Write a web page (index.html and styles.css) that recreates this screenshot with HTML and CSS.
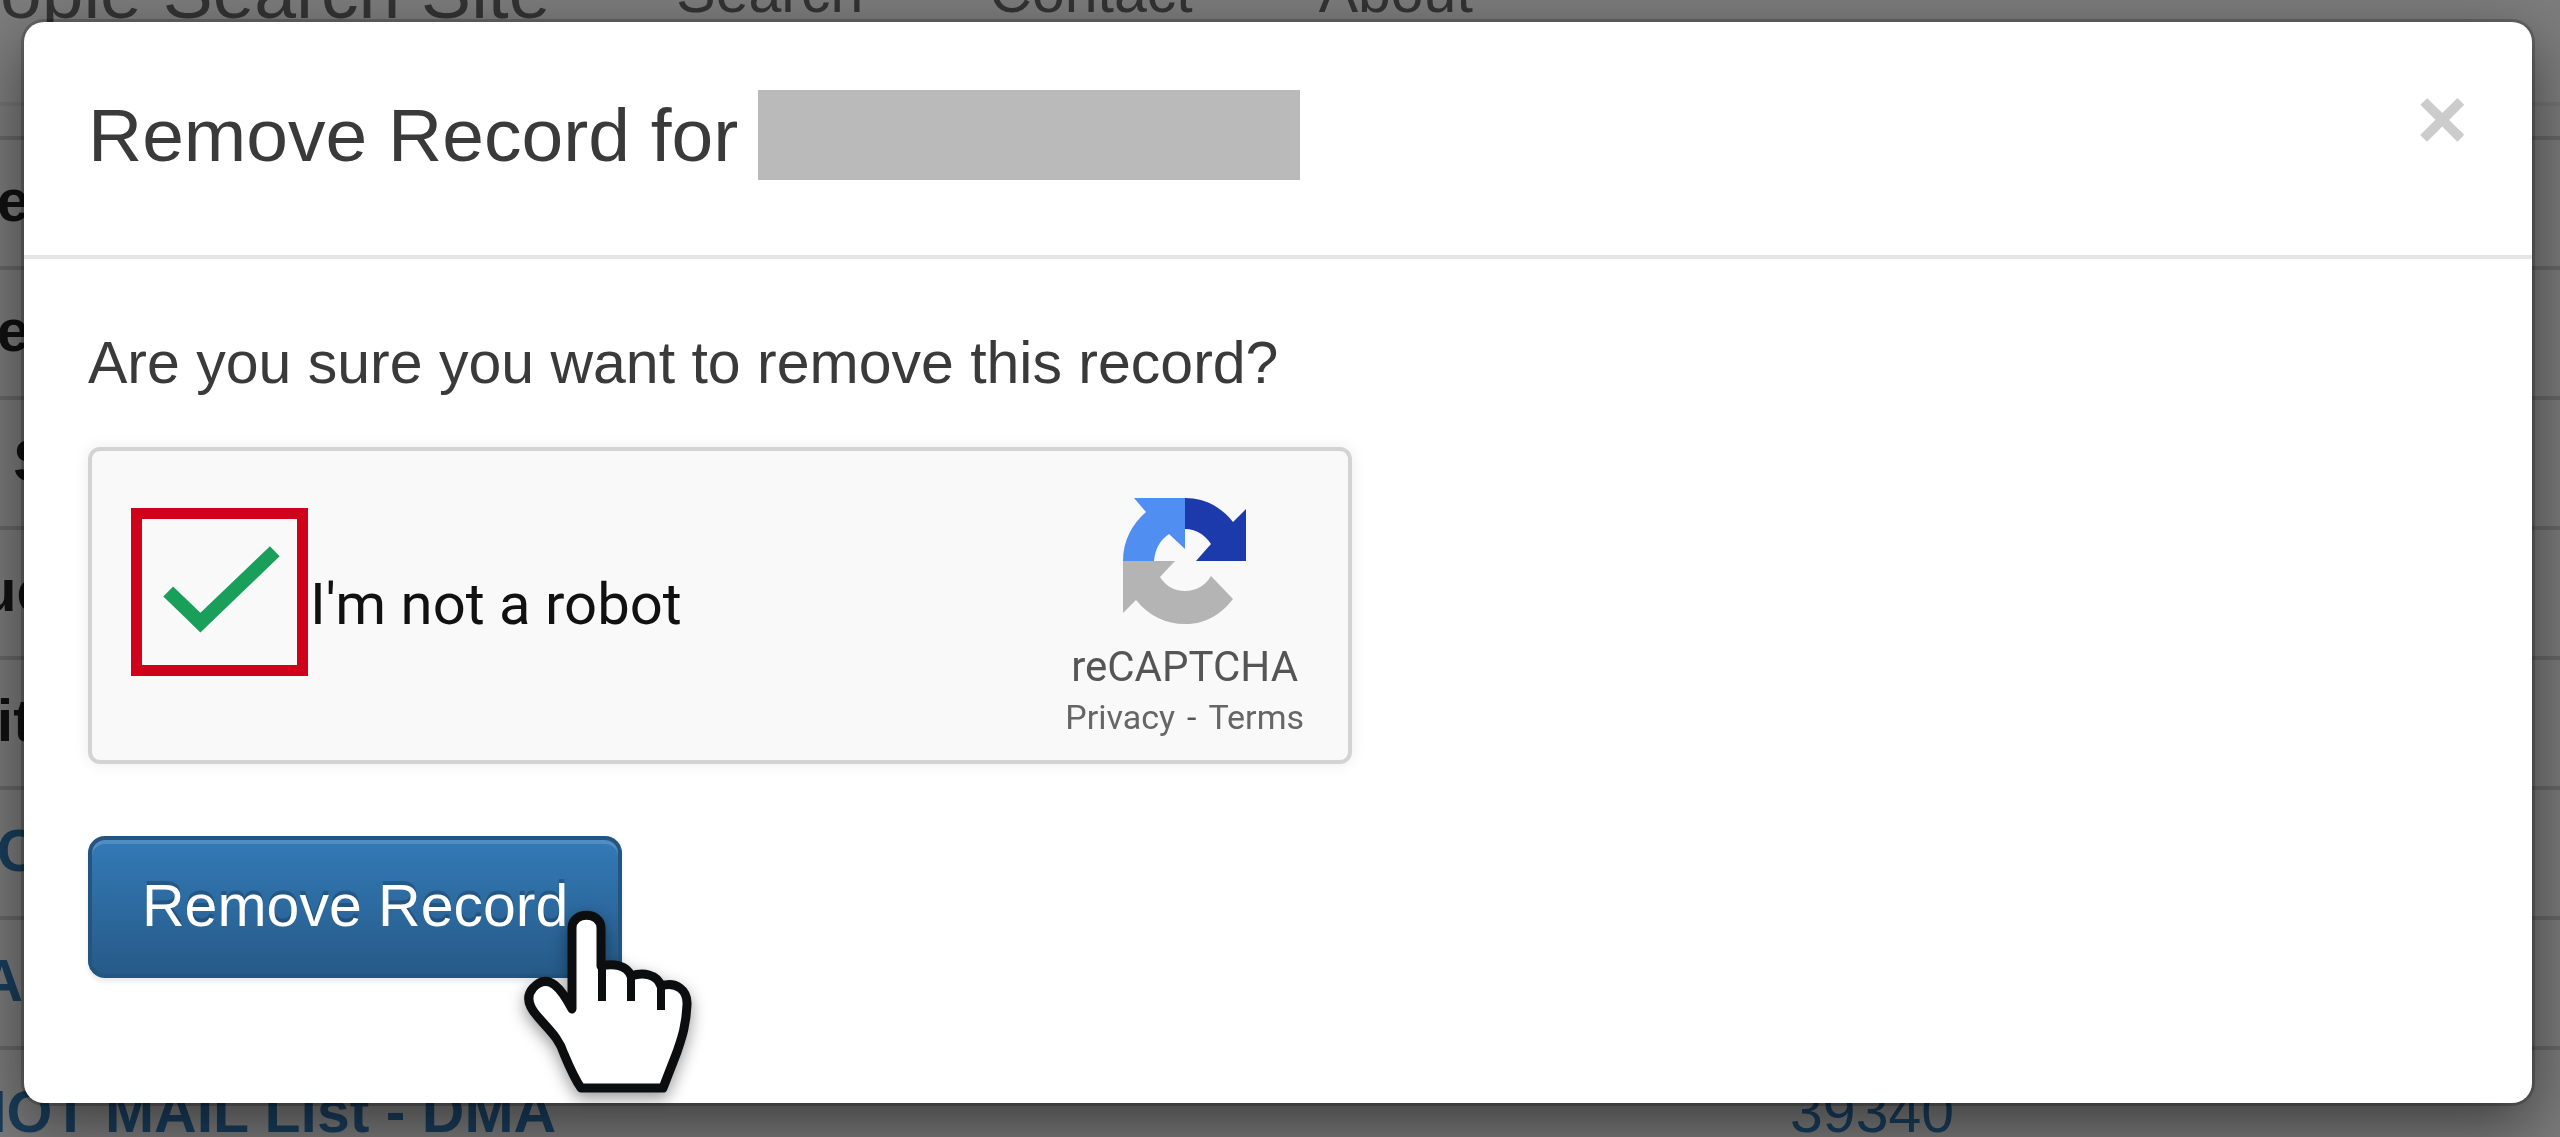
FILE: index.html
```html
<!DOCTYPE html>
<html lang="en">
<head>
  <meta charset="UTF-8" />
  <title>Remove Record</title>
  <link rel="stylesheet" href="styles.css">
</head>
<body>
  <div class="page">
    <nav class="navbar">
      <a class="brand" href="#">ople Search Site</a>
      <a class="nav-link" href="#">Search</a>
      <a class="nav-link" href="#">Contact</a>
      <a class="nav-link" href="#">About</a>
    </nav>
    <table class="records">
      <tr><th>&nbsp;&nbsp;e</th><td></td></tr>
      <tr><th>&nbsp;&nbsp;e</th><td></td></tr>
      <tr><th>&nbsp;&nbsp;&nbsp;S</th><td></td></tr>
      <tr><th>&nbsp;ue</th><td></td></tr>
      <tr><th>&nbsp;&nbsp;it</th><td></td></tr>
      <tr><th>&nbsp;&nbsp;<a href="#">C</a></th><td></td></tr>
      <tr><th>&nbsp;<a href="#">A</a></th><td></td></tr>
      <tr><th><a href="#">NOT MAIL List - DMA</a></th><td><a href="#">39340</a></td></tr>
    </table>
  </div>

  <div class="backdrop">
    <div class="modal" role="dialog" aria-labelledby="modal-title">
      <div class="modal-header">
        <h4 class="modal-title" id="modal-title">Remove Record for <span class="redacted"></span></h4>
        <button class="close" type="button" aria-label="Close">&times;</button>
      </div>
      <form class="modal-body">
        <p class="question">Are you sure you want to remove this record?</p>

        <div class="captcha">
          <div class="captcha-check">
            <span class="check-box">
              <input type="checkbox" id="robot" checked>
              <svg class="tick" viewBox="0 0 176 168" aria-hidden="true">
                <path d="M37 83 L69 114 L143 43" fill="none" stroke="#1a9f5b" stroke-width="14" />
              </svg>
            </span>
            <label for="robot">I'm not a robot</label>
          </div>
          <div class="captcha-brand">
            <svg class="captcha-logo" viewBox="0 0 124 126" aria-hidden="true">
              <path fill="#508ef1" d="M0 63 C0 43 9 26 23 14 L11 0 H62 V51 L46 36 C37 42 32 51 31 63 Z" />
              <path fill="#1d3aad" d="M62 0 C82 0 98 9 110 24 L123 11 V63 H73 L88 46 C82 37 73 31 62 31 Z" />
              <path fill="#b4b4b4" d="M0 63 H52 L37 79 C43 88 51 93 62 93 C73 93 82 88 88 78 L110 101 C98 117 82 126 62 126 C43 126 26 118 13 102 L0 115 Z" />
            </svg>
            <div class="captcha-name">reCAPTCHA</div>
            <div class="captcha-links"><a href="#">Privacy</a><span>-</span><a href="#">Terms</a></div>
          </div>
        </div>

        <div class="actions">
          <button class="btn" type="button">Remove Record</button>
          <svg class="pointer" viewBox="0 0 180 200" aria-hidden="true">
            <path d="M52 105 V24 C52 7 81 7 81 24 V62 C93 59 107 61 111 72 C123 68 137 70 141 82 C156 77 168 86 167 101 C166 122 162 133 157 148 L143 184 H61 C54 174 49 162 44 150 C39 134 29 126 18 113 C9 103 5 93 13 84 C29 67 42 86 52 105 Z" fill="#fff" stroke="#0b0d0f" stroke-width="9" stroke-linejoin="round" />
            <path d="M82 60 V97 M111 70 V97 M141 80 V106" fill="none" stroke="#0b0d0f" stroke-width="8" />
          </svg>
        </div>
      </form>
    </div>
  </div>
</body>
</html>
```

FILE: styles.css
```css
* {
  box-sizing: border-box;
}
body {
  margin: 0;
  height: 100vh;
  background: #f4f4f4;
  color: #3a3a3a;
  font-family: "Liberation Sans", Arial, sans-serif;
  font-size: 59px;
  line-height: 84px;
  overflow: hidden;
}
a {
  text-decoration: none;
}

/* page behind the dialog */
.page {
  margin-left: -36px;
}
.navbar {
  display: flex;
  align-items: flex-end;
  gap: 126px;
  height: 106px;
  padding: 0 36px 68px;
  border-bottom: 4px solid #e7e7e7;
  background: #f8f8f8;
}
.navbar a {
  color: #666;
}
.brand {
  font-size: 75px;
}
.records {
  width: 100%;
  margin-top: 30px;
  border-collapse: collapse;
}
.records th,
.records td {
  height: 130px;
  padding: 0 0 4px;
  border-top: 4px solid #ccc;
  text-align: left;
  white-space: nowrap;
}
.records th {
  width: 1826px;
  color: #222;
}
.records a {
  color: #337ab7;
}

/* dialog */
.backdrop {
  position: fixed;
  inset: 0;
  padding: 22px 28px 0 24px;
  background: rgba(0, 0, 0, 0.5);
}
.modal {
  border-radius: 20px;
  background: #fff;
  box-shadow: 0 0 0 3px rgba(0, 0, 0, 0.2), 0 21px 63px rgba(0, 0, 0, 0.5);
}
.modal-header {
  display: flex;
  justify-content: space-between;
  align-items: flex-start;
  padding: 59px 64px 66px;
  border-bottom: 4px solid #e5e5e5;
}
.modal-title {
  display: flex;
  align-items: center;
  gap: 20px;
  margin: 0;
  font-size: 75px;
  font-weight: normal;
  line-height: 108px;
}
.redacted {
  width: 542px;
  height: 90px;
  background: #bababa;
}
.close {
  padding: 0;
  border: 0;
  background: none;
  color: #ccc;
  font: bold 88px/76px "Liberation Sans", Arial, sans-serif;
  cursor: pointer;
}
.modal-body {
  padding: 62px 64px 125px;
}
.question {
  margin: 0 0 42px;
}

/* captcha */
.captcha {
  display: flex;
  justify-content: space-between;
  width: 1264px;
  height: 317px;
  border: 4px solid #d3d3d3;
  border-radius: 12px;
  background: #f9f9f9;
  box-shadow: 0 0 16px rgba(0, 0, 0, 0.08);
  font-family: Roboto, sans-serif;
}
.captcha-check {
  display: flex;
  align-items: flex-start;
  padding: 57px 0 0 39px;
}
.captcha-check label {
  padding: 54px 0 0 2px;
  color: #111;
  font-size: 58px;
}
.check-box {
  position: relative;
  width: 177px;
  height: 168px;
}
.check-box input {
  appearance: none;
  display: block;
  width: 100%;
  height: 100%;
  margin: 0;
  border: 11px solid #d0021b;
}
.tick {
  position: absolute;
  inset: 0;
  pointer-events: none;
}
.captcha-brand {
  display: flex;
  flex-direction: column;
  align-items: center;
  padding: 47px 44px 0 0;
  color: #555;
}
.captcha-logo {
  width: 124px;
  height: 126px;
}
.captcha-name {
  margin-top: 18px;
  font-size: 42px;
  line-height: 50px;
}
.captcha-links {
  display: flex;
  gap: 12px;
  font-size: 34px;
  line-height: 50px;
}
.captcha-links a {
  color: #666;
}

/* submit */
.actions {
  position: relative;
  margin-top: 72px;
}
.btn {
  display: block;
  height: 142px;
  padding: 0 50px 2px;
  border: 4px solid #245580;
  border-radius: 17px;
  background: linear-gradient(#337ab7, #265a88);
  box-shadow: inset 0 4px 0 rgba(255, 255, 255, 0.15), 0 4px 4px rgba(0, 0, 0, 0.08);
  color: #fff;
  font: 59px/84px "Liberation Sans", Arial, sans-serif;
  text-shadow: 0 -4px 0 rgba(0, 0, 0, 0.2);
  cursor: pointer;
}
.pointer {
  position: absolute;
  top: 68px;
  left: 432px;
  width: 180px;
  height: 200px;
  filter: drop-shadow(0 6px 8px rgba(0, 0, 0, 0.4));
}
```
